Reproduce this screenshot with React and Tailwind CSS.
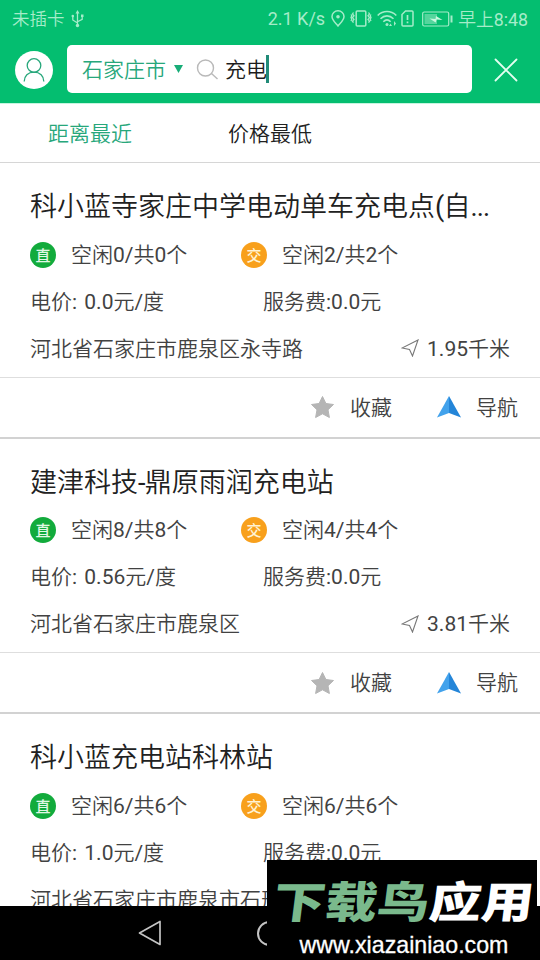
import React from 'react';

const stations = [
  {
    name: '科小蓝寺家庄中学电动单车充电点(自...',
    dc: '空闲0/共0个',
    ac: '空闲2/共2个',
    price: '电价: 0.0元/度',
    address: '河北省石家庄市鹿泉区永寺路',
    distance: '1.95千米',
  },
  {
    name: '建津科技-鼎原雨润充电站',
    dc: '空闲8/共8个',
    ac: '空闲4/共4个',
    price: '电价: 0.56元/度',
    address: '河北省石家庄市鹿泉区',
    distance: '3.81千米',
  },
  {
    name: '科小蓝充电站科林站',
    dc: '空闲6/共6个',
    ac: '空闲6/共6个',
    price: '电价: 1.0元/度',
    address: '河北省石家庄市鹿泉市石邢',
    distance: '',
  },
];

// Latin runs take the regular weight, Chinese runs keep the lighter one.
function Mixed({ text, className = '', latin = '' }) {
  const runs = text.split(/([\x20-\x7e]+)/).filter(Boolean);
  return (
    <span className={'whitespace-pre ' + className}>
      {runs.map((run, i) =>
        /^[\x20-\x7e]/.test(run) ? (
          <span key={i} className={'font-normal ' + latin}>{run}</span>
        ) : (
          run
        )
      )}
    </span>
  );
}

function StatusBar() {
  return (
    <div className="flex h-[37px] items-center pl-3 pr-3 text-[17.5px] leading-none text-[#a5ecc9]">
      <span className="w-[54px] pt-[2px]">未插卡</span>
      <svg className="ml-[5px]" width="13" height="18" viewBox="0 0 13 18" fill="none" stroke="currentColor" strokeWidth="1.3">
        <path d="M6.5 3v12M6.5 13L1.8 10V6M6.5 11.800l4.700-2.500V6" />
        <path d="M6.500 0l2 3.500h-4z" fill="currentColor" stroke="none" />
        <circle cx="6.500" cy="15.500" r="1.700" fill="currentColor" stroke="none" />
        <circle cx="1.800" cy="6" r="1.300" fill="currentColor" stroke="none" />
        <path d="M10 4.500h2.500v2.500H10z" fill="currentColor" stroke="none" />
      </svg>
      <Mixed text="2.1 K/s" className="ml-auto pt-px text-[18px]" />
      <svg className="ml-[6px]" width="14" height="17" viewBox="0 0 14 17" fill="none" stroke="currentColor" strokeWidth="1.500">
        <path d="M7 16C4 12.500 1 10 1 6.500a6 5.700 0 0 1 12 0C13 10 10 12.500 7 16z" />
        <circle cx="7" cy="6.800" r="1.800" fill="currentColor" stroke="none" />
      </svg>
      <svg className="ml-[5px]" width="22" height="17" viewBox="0 0 22 17" fill="none" stroke="currentColor" strokeWidth="1.500">
        <rect x="6.200" y="1" width="9.600" height="15" rx="1" />
        <path d="M3.500 2.500l-1 1.500 1.500 1.800-1.500 1.800L4 9.400l-1.500 1.800 1 1.500M1 4.500l.8 1.200L1 7.500l.8 1.800L1 11M18.500 2.500l1 1.500L18 5.800l1.500 1.800L18 9.400l1.500 1.800-1 1.500M21 4.500l-.8 1.200.8 1.800-.8 1.800.8 1.700" strokeWidth="1.300" />
      </svg>
      <svg className="ml-[5px]" width="20" height="17" viewBox="0 0 20 17" fill="none" stroke="currentColor" strokeWidth="1.600">
        <path d="M.7 5.500c5.300-5.300 13.300-5.300 18.600 0M3.500 8.700c3.900-3.800 9.100-3.800 13 0M6.300 11.700c2.200-2.200 5.200-2.200 7.400 0" />
        <circle cx="10" cy="14.500" r="1.500" fill="currentColor" stroke="none" />
        <path d="M13.500 13.500L15 16h-3zM17 11l2 2.500-2 2.500z" fill="currentColor" stroke="none" />
      </svg>
      <svg className="ml-[4px]" width="13" height="17" viewBox="0 0 13 17" fill="none" stroke="currentColor" strokeWidth="1.500">
        <path d="M4.500 1H11a1 1 0 0 1 1 1v13a1 1 0 0 1-1 1H2a1 1 0 0 1-1-1V4.500z" />
        <path d="M6.500 5v5M6.500 11.500v1.700" strokeWidth="1.700" />
      </svg>
      <svg className="ml-[8px]" width="31" height="16" viewBox="0 0 31 16" fill="none" stroke="currentColor" strokeWidth="1.200">
        <rect x=".7" y="1" width="26" height="14" rx="1.500" />
        <path d="M2.500 3H15v10H2.500z" fill="currentColor" fillOpacity=".5" stroke="none" />
        <path d="M7.500 7.500l6 .5.500-3 6.500 4-6-.5-.8 3z" fill="#c9f8df" stroke="none" />
        <path d="M29.500 4.500v7" strokeWidth="2" />
      </svg>
      <Mixed text="早上8:48" className="ml-[5px] pt-[2px] text-[17.800px]" />
    </div>
  );
}

function SearchBar() {
  return (
    <div className="flex h-[66px] items-center pb-0.5 pl-[15px]">
      <span className="mt-0.5 flex size-[38px] items-center justify-center rounded-full bg-white">
        <svg width="24" height="26" viewBox="0 0 24 26" fill="none" stroke="#27a77b" strokeWidth="1.300">
          <circle cx="12" cy="8.500" r="6.800" />
          <path d="M2.200 24.500c0-5.500 3.800-9.300 9.800-9.300s9.800 3.800 9.800 9.300" />
        </svg>
      </span>
      <div className="ml-[14px] flex h-12 w-[405px] items-center rounded-[5px] bg-white pl-[15px] text-[21px]">
        <span className="w-[84px] pt-[4px] text-[#27a77b]">石家庄市</span>
        <svg className="ml-[8px]" width="9" height="8" viewBox="0 0 9 8">
          <path d="M0 0h9L4.500 8z" fill="#18ad78" />
        </svg>
        <svg className="ml-[13px] mt-px" width="23" height="22" viewBox="0 0 23 22" fill="none" stroke="#b9b9b9" strokeWidth="1.400">
          <circle cx="9.500" cy="9" r="8" />
          <path d="M15.500 14.500l6 5.500" />
        </svg>
        <span className="ml-[6px] w-[41px] whitespace-nowrap pt-[4px] text-[#1c1c1c]">充电</span>
        <span className="h-7 w-[3px] bg-[#218b78]" />
      </div>
      <svg className="ml-[22px] mt-0.5" width="24" height="24" viewBox="0 0 24 24" stroke="#e4fff1" strokeWidth="1.800" strokeLinecap="round">
        <path d="M1.500 1.500l21 21M22.500 1.500l-21 21" />
      </svg>
    </div>
  );
}

function Station({ s }) {
  return (
    <section className="flex h-[275.5px] shrink-0 flex-col border-b-[2.5px] border-[#d2d2d2] bg-white text-[21px] text-[#424242]">
      <div className="flex h-[214.5px] flex-col border-b border-[#dedede] pl-[30px] pr-[30px] pt-[23px]">
        <h2 className="mb-[3px] h-[42px] whitespace-nowrap text-[27px] leading-[42px] text-[#212121]">
          <Mixed text={s.name} latin="tracking-[-0.8px]" />
        </h2>
        <div className="flex h-[47px] items-center">
          <span className="flex size-[26px] items-center justify-center rounded-full bg-[#12ab3c] pt-[3px] text-[15px] font-medium leading-none text-[#e0f8e4]">直</span>
          <Mixed text={s.dc} className="ml-[15px] w-[155px] pt-[2px]" />
          <span className="ml-[15px] flex size-[26px] items-center justify-center rounded-full bg-[#f8a01c] pt-[3px] text-[15px] font-medium leading-none text-[#fff3d4]">交</span>
          <Mixed text={s.ac} className="ml-[15px] pt-[2px]" />
        </div>
        <div className="flex h-[47px] items-center pt-[2px]">
          <Mixed text={s.price} className="w-[233px]" latin="[word-spacing:2px]" />
          <Mixed text="服务费:0.0元" />
        </div>
        <div className="flex h-[46px] items-center">
          <Mixed text={s.address} className="pt-[3px]" />
          {s.distance && (
            <>
              <svg className="ml-auto" width="18" height="18" viewBox="0 0 18 18" fill="none" stroke="#777" strokeWidth="1.100">
                <path d="M17 1L1 9l7.500 1.500L11.500 17z" />
              </svg>
              <Mixed text={s.distance} className="ml-[8px] pt-[3px]" />
            </>
          )}
        </div>
      </div>
      <div className="flex flex-1 items-center justify-end pr-[22px]">
        <svg width="25" height="24" viewBox="0 0 25 24">
          <path d="M12.500 1.500l3.400 7 7.600 1-5.500 5.300 1.400 7.700-6.900-3.700-6.900 3.700L7 14.800 1.500 9.500l7.600-1z" fill="#b5b5b5" stroke="#b5b5b5" strokeLinejoin="round" />
        </svg>
        <span className="ml-[15px] pt-[3px]">收藏</span>
        <svg className="ml-[45px]" width="24" height="22" viewBox="0 0 24 22">
          <path d="M12 0v17L0 21.500z" fill="#42a2ec" />
          <path d="M12 0v17l12 4.500z" fill="#2485d8" />
        </svg>
        <span className="ml-[15px] pt-[3px]">导航</span>
      </div>
    </section>
  );
}

export default function App() {
  return (
    <div className="relative flex h-[960px] w-[540px] flex-col overflow-hidden bg-white font-[Roboto,'Noto_Sans_CJK_SC',sans-serif] font-[350]">
      <header className="h-[103px] shrink-0 bg-[#04be70]">
        <StatusBar />
        <SearchBar />
      </header>
      <nav className="flex h-[60px] shrink-0 items-center border-b border-t border-b-[#d6d6d6] border-t-[#c5f5df] pt-[4px] text-[21px]">
        <span className="w-[180px] text-center text-[#27a77b]">距离最近</span>
        <span className="w-[180px] text-center text-[#212121]">价格最低</span>
      </nav>
      <main className="flex min-h-0 flex-1 flex-col overflow-hidden">
        {stations.map((s) => (
          <Station key={s.name} s={s} />
        ))}
      </main>
      <footer className="flex h-[54px] shrink-0 items-center bg-black pl-[138px]">
        <svg width="24" height="26" viewBox="0 0 24 26" fill="none" stroke="#c4c4c4" strokeWidth="1.700" strokeLinejoin="round">
          <path d="M22 1.500v23L1.500 13z" />
        </svg>
        <span className="ml-[95px] size-[25px] rounded-full border-2 border-[#c4c4c4]" />
      </footer>
      <div className="absolute bottom-0 left-[267px] flex h-[100px] w-[270px] flex-col items-center bg-black">
        <div className="mt-[16px] flex h-[54px] shrink-0 -skew-x-6 scale-x-[1.02] scale-y-[0.85] items-center whitespace-nowrap pl-[3px] text-[51px] font-black leading-none">
          <span className="text-[#7ab98c]">下载鸟</span>
          <span className="text-white">应用</span>
        </div>
        <div className="mt-px whitespace-nowrap pl-[4px] font-['Liberation_Sans',sans-serif] text-[23.2px] font-normal leading-[28px] text-white [-webkit-text-stroke:0.3px_white]">
          www.xiazainiao.com
        </div>
      </div>
    </div>
  );
}
